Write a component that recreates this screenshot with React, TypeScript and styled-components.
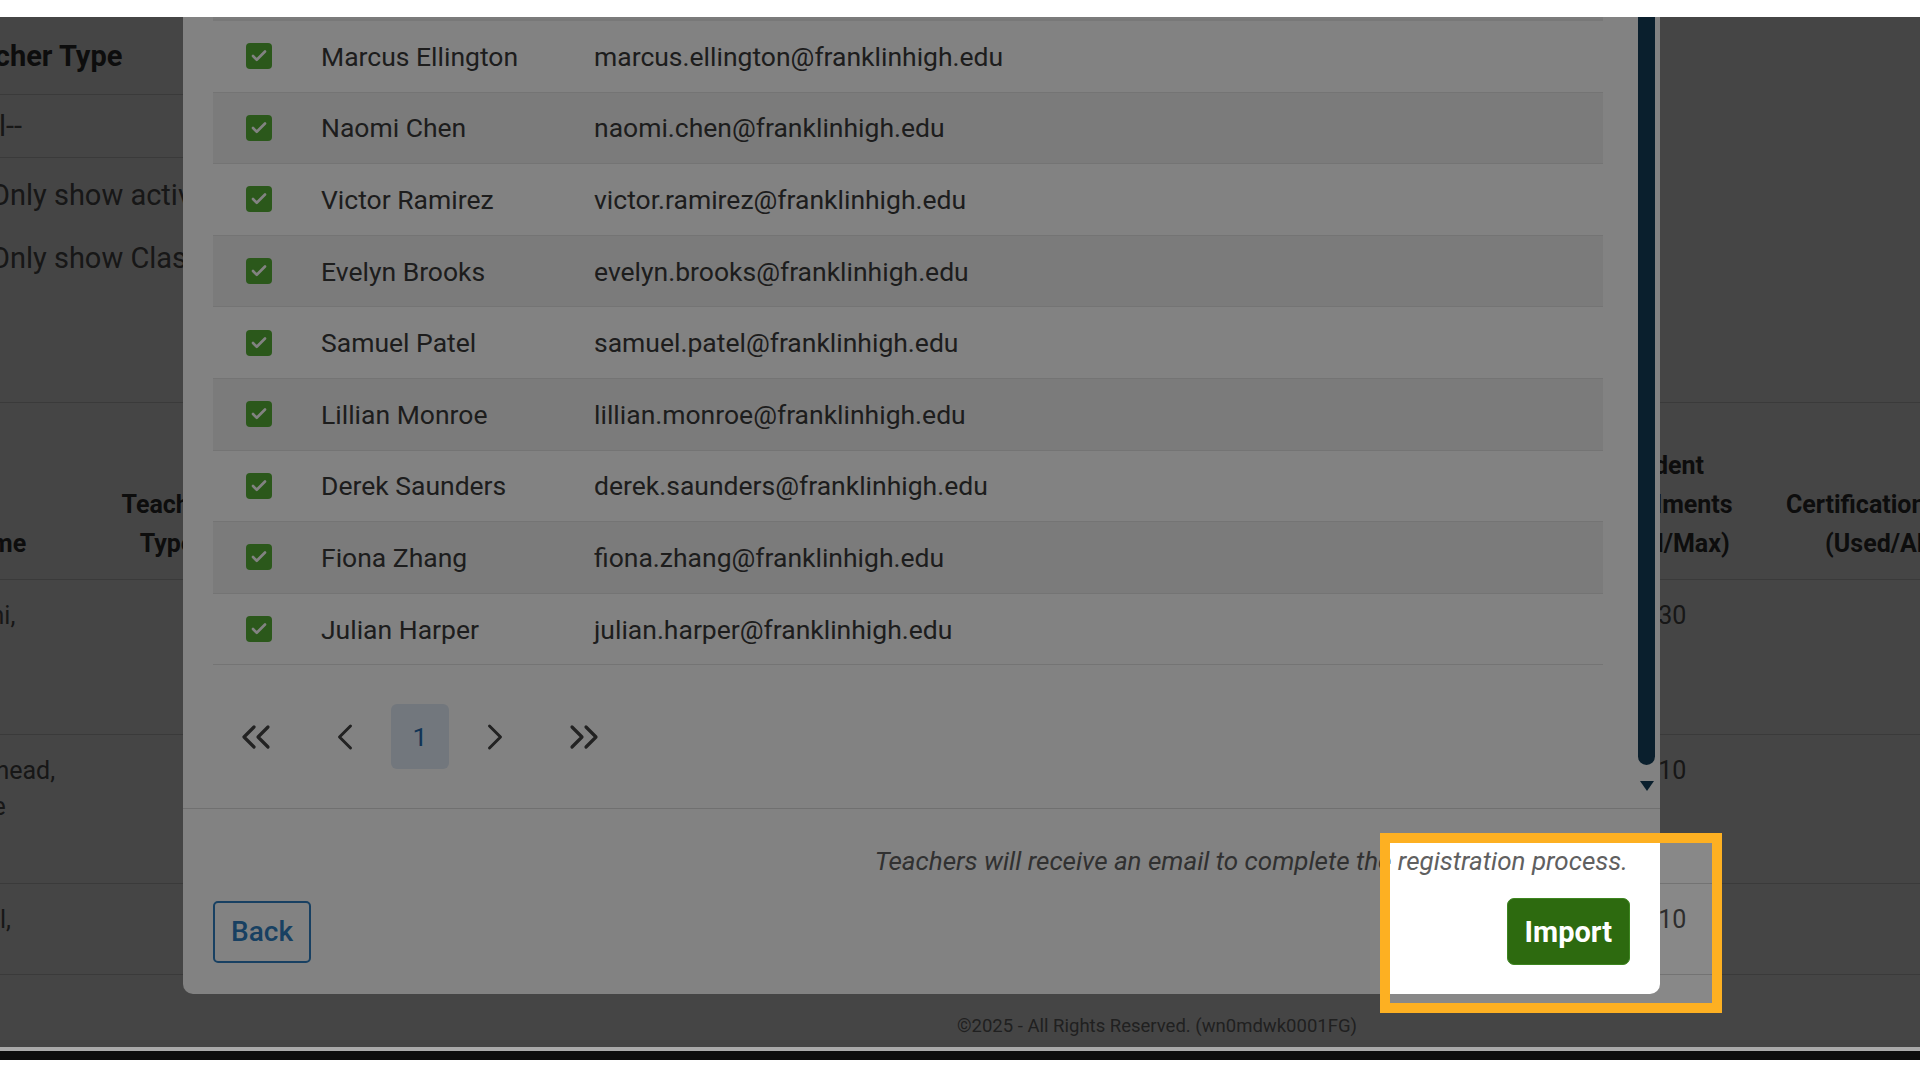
import React, { useLayoutEffect, useRef } from "react";
import styled, { createGlobalStyle } from "styled-components";
import {
  Check,
  ChevronLeft,
  ChevronRight,
  ChevronsLeft,
  ChevronsRight,
} from "lucide-react";

const GlobalStyle = createGlobalStyle`
  *,
  *::after,
  *::before {
    margin: 0;
    padding: 0;
    box-sizing: border-box;
  }

  html,
  body {
    width: 1920px;
    height: 1080px;
    overflow: hidden;
    background: #fff;
    font-family: Roboto, "Noto Sans", Arial, sans-serif;
  }
`;

const Screen = styled.div`
  display: flex;
  flex-direction: column;
  width: 1920px;
  height: 1080px;
`;

const TopStrip = styled.div`
  height: 17px;
  flex-shrink: 0;
  background: #fff;
`;

const Stage = styled.div`
  position: relative;
  height: 1030px;
  flex-shrink: 0;
  overflow: hidden;
  background: #fff;
`;

const BottomFrame = styled.div`
  display: flex;
  flex-direction: column;
  flex: 1;
`;

const FrameLine = styled.div<{ $h: number; $c: string }>`
  height: ${(p) => p.$h}px;
  background: ${(p) => p.$c};
`;

/* ---------- page behind the modal ---------- */

const Page = styled.div`
  display: flex;
  flex-direction: column;
  height: 100%;
  width: 2200px;
  margin-left: -84px;
  color: #555;
  font-size: 29px;
`;

const FilterPanel = styled.div`
  display: flex;
  flex-direction: column;
  width: 280px;
  height: 385px;
  padding-left: 31px;
`;

const FilterLabel = styled.div`
  display: flex;
  align-items: center;
  height: 78px;
  font-weight: 700;
  color: #333;
  white-space: nowrap;
  border-bottom: 1px solid #d8d8d8;
`;

const FilterSelect = styled.div`
  display: flex;
  align-items: center;
  height: 63px;
  padding-left: 10px;
  border-bottom: 1px solid #d8d8d8;
`;

const FilterChecks = styled.div`
  display: flex;
  flex-direction: column;
  padding-top: 5px;
`;

const FilterCheck = styled.label`
  display: flex;
  align-items: center;
  gap: 12px;
  height: 63px;
  padding-left: 7px;
  white-space: nowrap;
`;

const PlainBox = styled.span`
  width: 24px;
  height: 24px;
  border: 1px solid #999;
  border-radius: 4px;
  flex-shrink: 0;
`;

const GridRow = styled.div<{ $h: number }>`
  display: grid;
  grid-template-columns: 168px 166px 1348px 124px 380px;
  height: ${(p) => p.$h}px;
  border-bottom: 1px solid #d8d8d8;
  font-size: 25px;
`;

const HeadRow = styled(GridRow)`
  border-top: 1px solid #d8d8d8;
  font-weight: 700;
  color: #333;
`;

const HeadCell = styled.div<{ $pad?: number }>`
  align-self: end;
  padding: 0 0 16px ${(p) => p.$pad ?? 0}px;
  line-height: 39px;
  text-align: ${(p) => (p.$pad !== undefined ? "left" : "center")};
  white-space: nowrap;
`;

const BodyCell = styled.div<{ $center?: boolean }>`
  padding: 18px 0 0 ${(p) => (p.$center ? 0 : 16)}px;
  line-height: 36px;
  text-align: ${(p) => (p.$center ? "center" : "left")};
  white-space: nowrap;
`;

const PageFooter = styled.div`
  margin-top: auto;
  padding: 0 0 11px 478px;
  width: 2004px;
  text-align: center;
  font-size: 18.5px;
  line-height: 20px;
  color: #777;
`;

const Backdrop = styled.div`
  position: absolute;
  inset: 0;
  background: rgba(0, 0, 0, 0.465);
`;

/* ---------- modal ---------- */

const Modal = styled.div`
  position: absolute;
  left: 183px;
  top: 0;
  width: 1477px;
  height: 977px;
  display: flex;
  flex-direction: column;
  background: #fff;
  border-radius: 0 0 10px 10px;
  overflow: hidden;
  font-size: 26.5px;
  color: #3a3a3a;
`;

const ModalBody = styled.div`
  display: flex;
  height: 791px;
  flex-shrink: 0;
`;

const BodyScroll = styled.div`
  flex: 1;
  overflow-y: scroll;
  scrollbar-width: none;
  padding: 0 35px 0 30px;

  &::-webkit-scrollbar {
    display: none;
  }
`;

const ScrollContent = styled.div`
  padding-bottom: 39px;
`;

const ListHead = styled.div`
  display: flex;
  align-items: center;
  height: 52px;
  background: #f2f2f2;
  border-bottom: 2px solid #ececec;
  font-weight: 700;
`;

const PersonRow = styled.div<{ $striped: boolean }>`
  display: flex;
  align-items: center;
  height: 71.6px;
  background: ${(p) => (p.$striped ? "#f2f2f2" : "#fff")};
  border-bottom: 1px solid #e4e4e4;
`;

const CheckCell = styled.div`
  display: flex;
  align-items: center;
  width: 108px;
  padding-left: 33px;
`;

const GreenBox = styled.span`
  display: flex;
  align-items: center;
  justify-content: center;
  width: 26px;
  height: 26px;
  border-radius: 4px;
  background: #55ad35;
  color: #fff;
`;

const NameCell = styled.div`
  width: 273px;
  white-space: nowrap;
`;

const EmailCell = styled.div`
  white-space: nowrap;
`;

const Pager = styled.div`
  display: flex;
  align-items: center;
  gap: 17px;
  margin-top: 39px;
  height: 65px;
`;

const PageLink = styled.div<{ $wide?: boolean; $active?: boolean }>`
  display: flex;
  align-items: center;
  justify-content: center;
  width: ${(p) => (p.$wide ? 86 : 58)}px;
  height: 65px;
  border-radius: 6px;
  background: ${(p) => (p.$active ? "#dfe9f5" : "transparent")};
  color: ${(p) => (p.$active ? "#2467a8" : "#444")};
  font-size: 26.5px;
`;

const Rail = styled.div`
  display: flex;
  flex-direction: column;
  align-items: center;
  width: 22px;
  padding-right: 5px;
`;

const Thumb = styled.div`
  width: 17px;
  height: 748px;
  background: #143e58;
  border-radius: 0 0 9px 9px;
`;

const RailArrow = styled.svg`
  margin-top: 16px;
`;

const ModalFooter = styled.div`
  display: flex;
  flex-direction: column;
  flex: 1;
  padding: 37px 30px 29px;
  border-top: 1px solid #dcdcdc;
`;

const FooterNote = styled.div`
  padding-right: 2px;
  text-align: right;
  font-style: italic;
  font-size: 26px;
  line-height: 30px;
  color: #606060;
`;

const FooterActions = styled.div`
  display: flex;
  align-items: center;
  justify-content: space-between;
  margin-top: 22px;
  height: 67px;
`;

const BackButton = styled.button`
  height: 62px;
  padding: 0 16px;
  border: 2px solid #2f7fc0;
  border-radius: 5px;
  background: #fff;
  color: #2f7fc0;
  font-family: inherit;
  font-size: 28px;
  font-weight: 500;
`;

const ImportButton = styled.button`
  height: 67px;
  padding: 0 17px;
  border: 1px solid #3d8520;
  border-radius: 7px;
  background: #2d6a0f;
  color: #fff;
  font-family: inherit;
  font-size: 29px;
  font-weight: 700;
`;

const Spotlight = styled.div`
  position: absolute;
  left: 1380px;
  top: 816px;
  width: 342px;
  height: 180px;
  border: 10px solid #fdb022;
  box-shadow: 0 0 0 3000px rgba(0, 0, 0, 0.49);
  pointer-events: none;
`;

const teachers = [
  "Marcus Ellington",
  "Naomi Chen",
  "Victor Ramirez",
  "Evelyn Brooks",
  "Samuel Patel",
  "Lillian Monroe",
  "Derek Saunders",
  "Fiona Zhang",
  "Julian Harper",
];

const pageRows = [
  { h: 155, name: ["Gandhi,", "Priya"], enroll: "5/30" },
  { h: 149, name: ["Whitehead,", "Louise"], enroll: "2/10" },
  { h: 91, name: ["Powell,", "Tom"], enroll: "4/10" },
];

const toEmail = (name: string) =>
  name.toLowerCase().replace(" ", ".") + "@franklinhigh.edu";

const App = () => {
  const scrollRef = useRef<HTMLDivElement>(null);

  useLayoutEffect(() => {
    if (scrollRef.current) scrollRef.current.scrollTop = 9999;
  }, []);

  return (
    <>
      <GlobalStyle />
      <Screen>
        <TopStrip />
        <Stage>
          <Page>
            <FilterPanel>
              <FilterLabel>Teacher Type</FilterLabel>
              <FilterSelect>--All--</FilterSelect>
              <FilterChecks>
                <FilterCheck>
                  <PlainBox />
                  Only show active teachers
                </FilterCheck>
                <FilterCheck>
                  <PlainBox />
                  Only show Classroom teachers
                </FilterCheck>
              </FilterChecks>
            </FilterPanel>

            <HeadRow $h={178}>
              <HeadCell $pad={44}>Name</HeadCell>
              <HeadCell>
                Teacher
                <br />
                Type
              </HeadCell>
              <HeadCell />
              <HeadCell>
                Student
                <br />
                Enrollments
                <br />
                (Used/Max)
              </HeadCell>
              <HeadCell>
                Certification Vouchers
                <br />
                (Used/Allowed)
              </HeadCell>
            </HeadRow>
            {pageRows.map((r) => (
              <GridRow key={r.name[0]} $h={r.h}>
                <BodyCell>
                  {r.name[0]}
                  <br />
                  {r.name[1]}
                </BodyCell>
                <BodyCell />
                <BodyCell />
                <BodyCell $center>{r.enroll}</BodyCell>
                <BodyCell />
              </GridRow>
            ))}

            <PageFooter>©2025 - All Rights Reserved. (wn0mdwk0001FG)</PageFooter>
          </Page>

          <Backdrop />

          <Modal>
            <ModalBody>
              <BodyScroll ref={scrollRef}>
                <ScrollContent>
                  <ListHead>
                    <CheckCell />
                    <NameCell>Name</NameCell>
                    <EmailCell>Email</EmailCell>
                  </ListHead>
                  {teachers.map((t, i) => (
                    <PersonRow key={t} $striped={i % 2 === 1}>
                      <CheckCell>
                        <GreenBox>
                          <Check size={18} strokeWidth={3.5} />
                        </GreenBox>
                      </CheckCell>
                      <NameCell>{t}</NameCell>
                      <EmailCell>{toEmail(t)}</EmailCell>
                    </PersonRow>
                  ))}
                  <Pager>
                    <PageLink $wide>
                      <ChevronsLeft size={48} strokeWidth={1.6} />
                    </PageLink>
                    <PageLink>
                      <ChevronLeft size={44} strokeWidth={1.6} />
                    </PageLink>
                    <PageLink $active>1</PageLink>
                    <PageLink>
                      <ChevronRight size={44} strokeWidth={1.6} />
                    </PageLink>
                    <PageLink $wide>
                      <ChevronsRight size={48} strokeWidth={1.6} />
                    </PageLink>
                  </Pager>
                </ScrollContent>
              </BodyScroll>
              <Rail>
                <Thumb />
                <RailArrow width="14" height="10" viewBox="0 0 14 10">
                  <path d="M0 0 H14 L7 10 Z" fill="#143e58" />
                </RailArrow>
              </Rail>
            </ModalBody>
            <ModalFooter>
              <FooterNote>
                Teachers will receive an email to complete the registration
                process.
              </FooterNote>
              <FooterActions>
                <BackButton>Back</BackButton>
                <ImportButton>Import</ImportButton>
              </FooterActions>
            </ModalFooter>
          </Modal>

          <Spotlight />
        </Stage>
        <BottomFrame>
          <FrameLine $h={4} $c="#a9a9a9" />
          <FrameLine $h={9} $c="#0c0c0c" />
          <FrameLine $h={20} $c="#fff" />
        </BottomFrame>
      </Screen>
    </>
  );
};

export default App;
